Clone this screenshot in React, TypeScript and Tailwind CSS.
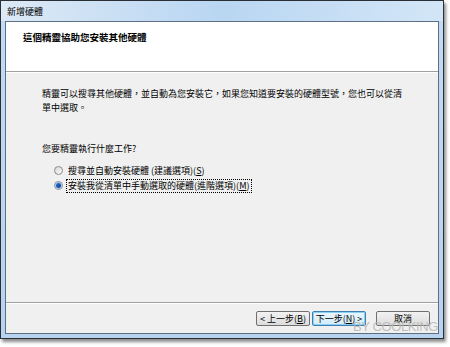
import React from "react";

const cjk = { fontFamily: '"Noto Sans CJK TC", "Noto Sans", sans-serif' };

function Radio({ checked }: { checked?: boolean }) {
  return (
    <span className="relative inline-flex h-[9px] w-[9px] shrink-0 items-center justify-center rounded-full border border-[#8a8a8a] bg-gradient-to-br from-[#d8d8d8] to-[#fbfbfb]">
      {checked && (
        <span className="h-[5px] w-[5px] rounded-full bg-gradient-to-br from-[#2a6fc9] to-[#0f3f8c] ring-1 ring-[#9fc3ee]" />
      )}
    </span>
  );
}

function Btn({ children, focused }: { children: React.ReactNode; focused?: boolean }) {
  return (
    <div
      className={
        "flex h-[15px] w-[54px] items-center justify-center rounded-[2px] border text-[9px] leading-none text-black " +
        (focused
          ? "border-[#3c7fb1] bg-gradient-to-b from-[#eaf6fd] to-[#d4ecfb] shadow-[inset_0_0_0_1px_#8ad0f5]"
          : "border-[#707070] bg-gradient-to-b from-[#f2f2f2] to-[#dcdcdc]")
      }
      style={cjk}
    >
      {children}
    </div>
  );
}

export default function App() {
  return (
    <div className="relative h-[347px] w-[450px] overflow-hidden bg-white">
      <div className="flex h-[339px] w-[444px] flex-col border border-[#2a2f36] bg-gradient-to-b from-[#c3dbf3] to-[#b7d3ef] shadow-[2px_3px_3px_rgba(0,0,0,0.45)]">
        {/* title bar */}
        <div className="flex h-[20px] shrink-0 items-center bg-gradient-to-r from-[#dce9f6] via-[#b9d6f2] to-[#d3e6f7] pl-[6px]">
          <span className="text-[9px] leading-none text-black" style={cjk}>
            新增硬體
          </span>
        </div>
        {/* content */}
        <div className="mx-[4px] mb-[4px] flex flex-1 flex-col border border-[#5d6f82] bg-[#f0f0f0]">
          <div className="flex h-[50px] shrink-0 flex-col border-b border-[#a0a0a0] bg-white pl-[17px] pt-[8px]">
            <span className="text-[9.5px] font-bold leading-[14px] text-black" style={cjk}>
              這個精靈協助您安裝其他硬體
            </span>
          </div>
          <div className="flex flex-1 flex-col border-t border-white pl-[36px] pt-[14px] text-[9px] leading-[14px] text-black" style={cjk}>
            <div>精靈可以搜尋其他硬體，並自動為您安裝它，如果您知道要安裝的硬體型號，您也可以從清</div>
            <div>單中選取。</div>
            <div className="mt-[27px]">您要精靈執行什麼工作?</div>
            <div className="mt-[7px] flex h-[15px] items-center gap-[3px] pl-[12px]">
              <Radio />
              <span className="border border-transparent px-px leading-[12px]">
                搜尋並自動安裝硬體 (建議選項)(<span className="underline">S</span>)
              </span>
            </div>
            <div className="flex h-[15px] items-center gap-[3px] pl-[12px]">
              <Radio checked />
              <span className="border border-dotted border-black px-px leading-[12px]">
                安裝我從清單中手動選取的硬體(進階選項)(<span className="underline">M</span>)
              </span>
            </div>
          </div>
          <div className="flex h-[31px] shrink-0 items-center justify-end border-t border-[#a0a0a0] pr-[8px] shadow-[inset_0_1px_0_#ffffff]">
            <Btn>
              &lt; 上一步(<span className="underline">B</span>)
            </Btn>
            <div className="ml-[2px]">
              <Btn focused>
                下一步(<span className="underline">N</span>) &gt;
              </Btn>
            </div>
            <div className="ml-[10px]">
              <Btn>取消</Btn>
            </div>
          </div>
        </div>
      </div>
      <div
        className="absolute left-[353px] top-[320px] text-[13px] leading-none tracking-[-0.4px] text-[#b8b8b8]/90"
        style={{ fontFamily: '"Liberation Sans", Arial, sans-serif' }}
      >
        BY COOLKING
      </div>
    </div>
  );
}
